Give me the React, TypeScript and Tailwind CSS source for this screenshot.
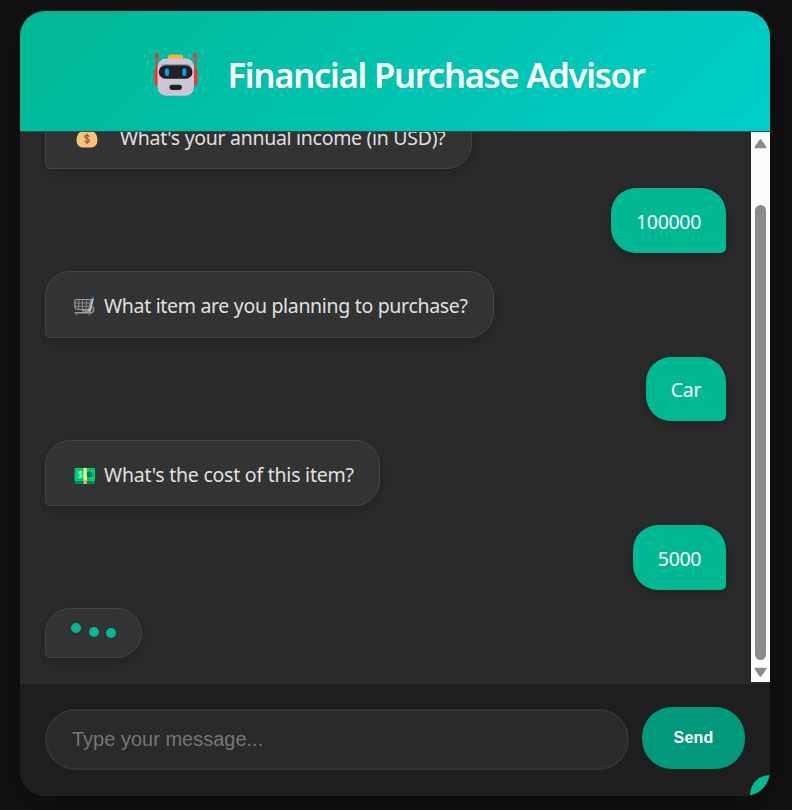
import type { ReactNode } from "react";

function Robot() {
  return (
    <svg width="44" height="44" viewBox="0 0 44 44" className="shrink-0">
      <path d="M2.5 3v20M41.5 3v20" stroke="#f8312f" strokeWidth="1.7" />
      <circle cx="2.8" cy="2.4" r="2.2" fill="#f8312f" />
      <circle cx="41" cy="2.4" r="2.2" fill="#f8312f" />
      <rect x="0.4" y="15.5" width="6" height="17" rx="2.5" fill="#f8312f" />
      <rect x="37.2" y="15.5" width="6" height="17" rx="2.5" fill="#f8312f" />
      <rect x="14" y="1.5" width="15.3" height="8" rx="2.6" fill="#fcb02b" />
      <rect x="3.6" y="5.6" width="36.4" height="37.2" rx="8.5" fill="#cdc4d6" />
      <path d="M7 12.5Q9.5 11.6 13 11.6h17.5q3.5 0 6 .9" stroke="#998ea4" strokeWidth="1" fill="none" />
      <rect x="4.8" y="12.3" width="33.7" height="13.4" rx="6.7" fill="#212121" />
      <rect x="11" y="15.3" width="4" height="7.6" rx="2" fill="#00a6ed" />
      <rect x="28.3" y="15.3" width="4" height="7.6" rx="2" fill="#00a6ed" />
      <rect x="15.5" y="31.7" width="12.4" height="5.2" rx="2.3" fill="#212121" />
    </svg>
  );
}

function MoneyBag() {
  return (
    <svg width="22" height="22" viewBox="0 0 22 22" className="mt-[3px] shrink-0">
      <path d="M7 0h8l-1.600 4h-4.800z" fill="#f3ad61" />
      <path d="M7 3.500h8c4 1 6.500 5 6.500 9.500 0 4.900-3 7.500-6.600 7.500H7.100C3.500 20.500.5 17.900.5 13 .5 8.500 3 4.500 7 3.500z" fill="#f9c279" />
      <path d="M13.200 9.800c-.3-1-1.100-1.500-2.200-1.500-1.300 0-2.200.6-2.200 1.600 0 2.300 4.500 1.200 4.500 3.600 0 1.100-.9 1.700-2.300 1.700-1.200 0-2.100-.5-2.400-1.600M11 6.600v10.400" fill="none" stroke="#8c5543" strokeWidth="1.150" />
    </svg>
  );
}

function Cart() {
  return (
    <svg width="22" height="22" viewBox="0 0 22 22" className="mt-[4px] shrink-0">
      <path d="M2.500 3.500H17L14.800 13.500H5C2 13.500.8 13 .8 10.500V5.500q0-2 1.700-2z" fill="#3b3b3b" stroke="#9b9b9b" strokeWidth="1.200" />
      <path d="M4.800 4v9.500M8.500 4v9.500M12.300 4v9.500M1 7h15M1 10.300h14.500" stroke="#858585" strokeWidth="1" />
      <path d="M19 2.300L16.200 14.500l-2.500-.5" fill="none" stroke="#c4c4c4" strokeWidth="1.800" />
      <path d="M8 14.500l8 1M18.500 10.500c1.700 1.200 1.600 5.500-1 6.300H.5" fill="none" stroke="#999" strokeWidth="1.500" />
      <circle cx="18.800" cy="1.800" r="1.300" fill="#0085d5" />
      <circle cx="2.800" cy="18.500" r="1.100" fill="#0085d5" />
      <circle cx="15.600" cy="18.500" r="1.100" fill="#0085d5" />
    </svg>
  );
}

function Cash() {
  return (
    <svg width="22" height="22" viewBox="0 0 22 22" className="mt-[5px] shrink-0">
      <rect x="0.700" y="5" width="20.300" height="14" rx="1.500" fill="#008463" />
      <rect x="0.700" y="3" width="20.300" height="13" rx="1.400" fill="#00e17b" />
      <rect x="2" y="4.300" width="17.700" height="10.400" rx="1" fill="none" stroke="#00a86b" strokeWidth="1" />
      <circle cx="15" cy="9.500" r="3.300" fill="#007d5a" />
      <path d="M8 7.500C7.300 6.500 4.500 6.700 4.800 8.200c.3 1.500 3.400.9 3.300 2.700-.1 1.600-2.800 1.700-3.600.5M6.400 5.700v7.400" fill="none" stroke="#8ff3bd" strokeWidth="1" />
      <path d="M9.500 3h3.300v13H9.500z" fill="#fff478" />
      <path d="M9.500 15h3.300v4H9.500z" fill="#f3ad61" />
    </svg>
  );
}

function BotBubble({ box, children }: { box: string; children: ReactNode }) {
  return (
    <div
      className={`flex shrink-0 items-center rounded-[25px] rounded-bl-[5px] border border-[#444444] bg-[#333333] text-[#e0e0e0] shadow-[0_4px_12px_rgba(0,0,0,0.2)] ${box}`}
    >
      {children}
    </div>
  );
}

function UserBubble({ box, children }: { box: string; children: ReactNode }) {
  return (
    <div
      className={`flex shrink-0 items-center justify-center self-end rounded-[25px] rounded-br-[5px] bg-[#00b894] text-white shadow-[0_4px_12px_rgba(0,0,0,0.2)] ${box}`}
    >
      {children}
    </div>
  );
}

export default function App() {
  return (
    <div className="h-[810px] w-[792px] overflow-hidden bg-[#121212] pt-[10.500px] pl-5 font-['Noto_Sans',sans-serif]">
      <div className="relative flex h-[785px] w-[750px] flex-col overflow-hidden rounded-[25px] bg-[#1e1e1e] shadow-[0_10px_40px_rgba(0,0,0,0.5)]">
        <header className="flex h-[121.500px] shrink-0 items-center border-b border-[#2d5050] bg-[linear-gradient(135deg,#00b894,#00cec9)] pl-[134px]">
          <div className="pt-[9px]">
            <Robot />
          </div>
          <h1 className="ml-[29.500px] pt-[8px] text-[34.500px] font-semibold tracking-[-1.210px] whitespace-nowrap text-white">
            Financial Purchase Advisor
          </h1>
        </header>
        <div className="flex h-[550px] shrink-0 bg-[#2a2a2a]">
          <main className="flex min-w-0 flex-1 flex-col justify-end overflow-hidden pr-[25px] pb-6 pl-[25px] text-[19.500px] tracking-[-0.300px] whitespace-nowrap">
            <BotBubble box="mb-[19px] h-[66px] w-[427px] pl-[30px]">
              <MoneyBag />
              <span className="ml-[22px] pt-[3px]">What's your annual income (in USD)?</span>
            </BotBubble>
            <UserBubble box="mb-[18px] h-[65px] w-[115px] pt-[3px]">100000</UserBubble>
            <BotBubble box="mb-[19px] h-[67px] w-[449px] pl-7">
              <Cart />
              <span className="ml-2 pt-[3px] tracking-[-0.320px]">What item are you planning to purchase?</span>
            </BotBubble>
            <UserBubble box="mb-[19px] h-16 w-20 pt-[2px]">Car</UserBubble>
            <BotBubble box="mb-[19px] h-[66px] w-[335px] pl-7">
              <Cash />
              <span className="ml-2 pt-[3px] tracking-[-0.230px]">What's the cost of this item?</span>
            </BotBubble>
            <UserBubble box="mb-[18px] h-[65px] w-[93px] pt-[3px]">5000</UserBubble>
            <BotBubble box="h-[50px] w-[97px] pl-[25px]">
              <span className="mb-[10px] size-[10px] rounded-full bg-[#00b894]" />
              <span className="mb-[2px] ml-2 size-[10px] rounded-full bg-[#00b894]" />
              <span className="ml-[7px] size-[10px] rounded-full bg-[#00b894]" />
            </BotBubble>
          </main>
          <div className="flex w-[19px] flex-col items-center bg-[#fcfcfc]">
            <svg width="14" height="12" viewBox="0 0 14 12" className="mt-[6px] shrink-0">
              <path d="M6.500 2L11.600 9.300H1.400z" fill="#8b8b8b" stroke="#8b8b8b" strokeWidth="1.800" strokeLinejoin="round" />
            </svg>
            <div className="mt-[55px] h-[455px] w-[11px] rounded-full bg-[#8b8b8b]" />
            <svg width="14" height="12" viewBox="0 0 14 12" className="mt-[6px] shrink-0">
              <path d="M6.500 10L11.600 2.700H1.400z" fill="#8b8b8b" stroke="#8b8b8b" strokeWidth="1.800" strokeLinejoin="round" />
            </svg>
          </div>
        </div>
        <footer className="flex flex-1 items-start border-t-2 border-[#2a2a2a] bg-[#1e1e1e] px-[25px] font-['Liberation_Sans',Arial,sans-serif]">
          <input
            placeholder="Type your message..."
            className="mt-[24.500px] h-[61.500px] w-[584px] rounded-[31px] border-2 border-[#333333] bg-[#2a2a2a] px-[25px] text-[20px] text-white outline-none placeholder:text-[#757575]"
          />
          <button className="mt-[23px] ml-[13px] h-[62px] w-[103px] rounded-[30px] bg-[#00997b] text-[16px] font-bold tracking-[0.200px] text-white">
            Send
          </button>
        </footer>
        <div className="absolute right-0 bottom-[0.500px] size-5 rounded-tl-[20px] bg-[#00b894]" />
      </div>
    </div>
  );
}
